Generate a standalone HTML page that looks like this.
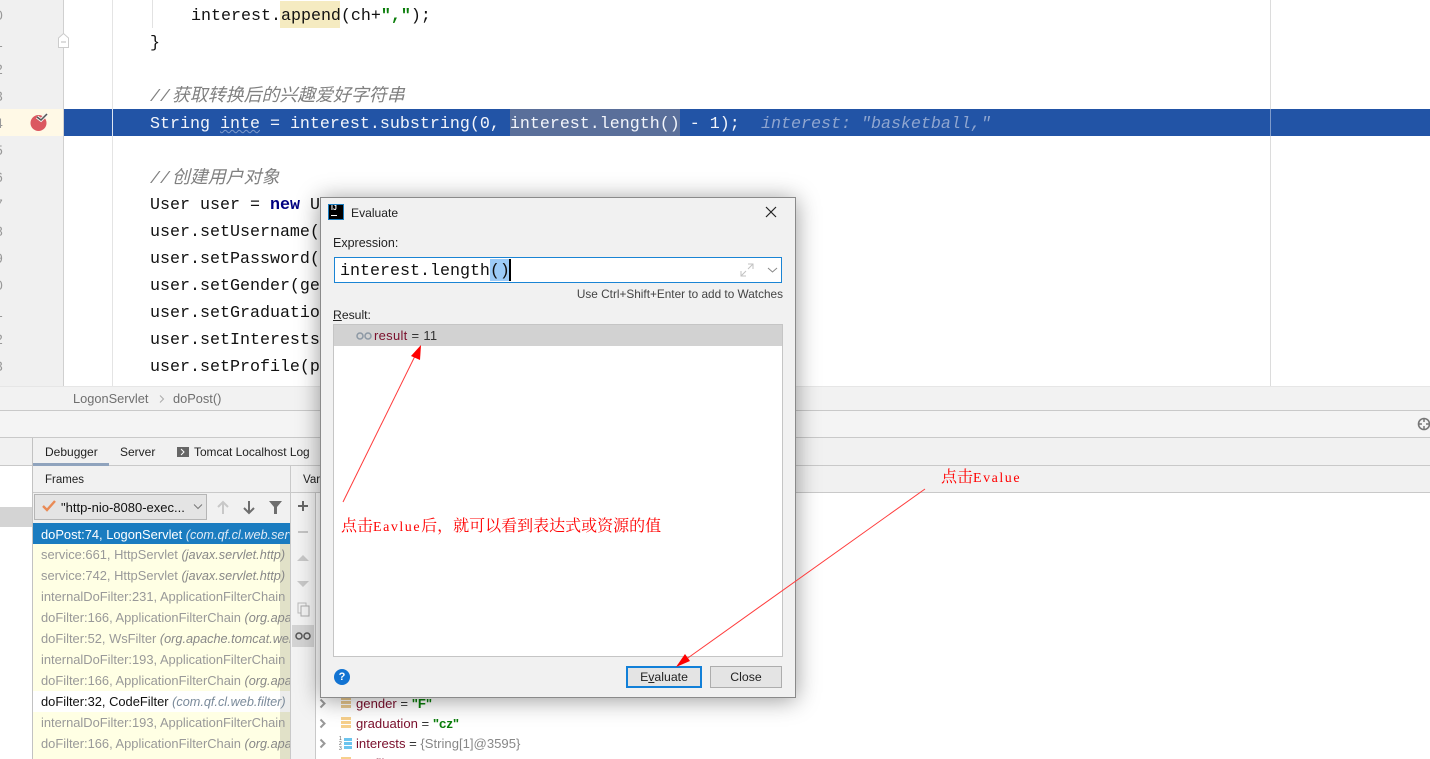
<!DOCTYPE html>
<html style="overflow:hidden;height:759px"><head><meta charset="utf-8"><style>
html,body{margin:0;padding:0}
body{width:1430px;height:759px;overflow:hidden;background:#fff;position:relative;font-family:"Liberation Sans","Noto Sans CJK SC",sans-serif}
.a{position:absolute}
.c{position:absolute;left:150px;height:27px;font:16.67px/27px "Liberation Mono","Noto Sans CJK SC",monospace;color:#111;white-space:pre}
.cm{font-style:italic;color:#808080}
.cm span{font-size:17.9px;margin-left:2px}
.t{position:absolute;white-space:pre;font-size:12px;line-height:16px;color:#222}
.f{position:absolute;left:41px;white-space:pre;font-size:12.9px;line-height:21px;height:21px;color:#999;width:249px;overflow:hidden}
.f i{color:#888;font-size:12.7px}
.n{position:absolute;left:-5px;font:14px/14px "Liberation Sans",sans-serif;color:#999;width:10px}
.v{position:absolute;left:356px;white-space:pre;font-size:13.1px;line-height:16px;color:#7a0f2c}
.red{position:absolute;color:#f00;white-space:pre;font:16px/20px "Noto Serif CJK SC",serif}
.red span{font:14px/20px "Liberation Serif",serif;letter-spacing:1.530px}
</style></head><body>

<!-- editor -->
<div class="a" style="left:0;top:0;width:64px;height:386px;background:#f0f0f0;border-right:1px solid #d0d0d0;box-sizing:border-box"></div>
<div class="a" style="left:112px;top:0;width:1px;height:386px;background:#e4e4e4"></div>
<div class="a" style="left:1270px;top:0;width:1px;height:386px;background:#dcdcdc"></div>
<div class="a" style="left:0;top:109px;width:63px;height:27px;background:#fff9e6"></div>
<div class="a" style="left:64px;top:109px;width:1366px;height:27px;background:#2254a6"></div>
<div class="a" style="left:112px;top:109px;width:1px;height:27px;background:#dfe6f2"></div>
<div class="a" style="left:1270px;top:109px;width:1px;height:27px;background:#7f9bcb"></div>
<div class="a" style="left:152px;top:0;width:1px;height:28px;background:#e2e2e2"></div>
<div class="a" style="left:280px;top:1px;width:60px;height:27px;background:#f5ebc1"></div>
<div class="a" style="left:510px;top:109px;width:170px;height:27px;background:#5a6f9a"></div>
<svg class="a" style="left:57px;top:32px" width="14" height="17"><path d="M1.500 15.500V6L6.500 1.500 11.500 6v9.500z" fill="#fff" stroke="#ccc"/><path d="M4 10h5" stroke="#bbb"/></svg>
<svg class="a" style="left:28px;top:112px" width="22" height="22"><circle cx="10.500" cy="11" r="8" fill="#db5860"/><path d="M9 5l4 3 6-6" fill="none" stroke="#f3f3f3" stroke-width="3.500"/><path d="M9 5l4 3 6-6" fill="none" stroke="#555" stroke-width="1.500"/></svg>
<div class="n" style="top:8px">0</div><div class="n" style="top:35px">1</div><div class="n" style="top:62px">2</div><div class="n" style="top:89px">3</div><div class="n" style="top:116px">4</div><div class="n" style="top:143px">5</div><div class="n" style="top:170px">6</div><div class="n" style="top:197px">7</div><div class="n" style="top:224px">8</div><div class="n" style="top:251px">9</div><div class="n" style="top:278px">0</div><div class="n" style="top:305px">1</div><div class="n" style="top:332px">2</div><div class="n" style="top:359px">3</div>

<div class="c" style="top:3px;left:191px">interest.append(ch+<span style="color:#0a7d0a;font-weight:bold">","</span>);</div>
<div class="c" style="top:30px">}</div>
<div class="c cm" style="top:84px">//<span>获取转换后的兴趣爱好字符串</span></div>
<div class="c" style="top:111px;color:#f2f5fb">String <span style="text-decoration:underline wavy #7f9bcb 1px">inte</span> = interest.substring(0, interest.length() - 1);</div>
<div class="c" style="top:111px;left:761px;font-style:italic;color:#8fa6d0">interest: "basketball,"</div>
<div class="c cm" style="top:166px">//<span>创建用户对象</span></div>
<div class="c" style="top:192px">User user = <b style="color:#000080">new</b> User();</div>
<div class="c" style="top:219px">user.setUsername(username);</div>
<div class="c" style="top:246px">user.setPassword(password);</div>
<div class="c" style="top:273px">user.setGender(gender);</div>
<div class="c" style="top:300px">user.setGraduation(graduation);</div>
<div class="c" style="top:327px">user.setInterests(inte);</div>
<div class="c" style="top:354px">user.setProfile(profile);</div>

<!-- breadcrumb and toolbars -->
<div class="a" style="left:0;top:386px;width:1430px;height:25px;background:#f2f2f2;border-top:1px solid #e6e6e6;border-bottom:1px solid #c9c9c9;box-sizing:border-box"></div>
<div class="t" style="left:73px;top:391px;color:#6f6f6f;font-size:12.800px">LogonServlet</div>
<svg class="a" style="left:158px;top:394px" width="8" height="10"><path d="M2 1.500l3.500 3.500L2 8.500" fill="none" stroke="#aaa"/></svg>
<div class="t" style="left:173px;top:391px;color:#6f6f6f;font-size:12.800px">doPost()</div>
<div class="a" style="left:0;top:411px;width:1430px;height:27px;background:#f4f4f4;border-bottom:1px solid #c9c9c9;box-sizing:border-box"></div>
<svg class="a" style="left:1417px;top:417px" width="13" height="14"><circle cx="7" cy="7" r="5.500" fill="none" stroke="#777" stroke-width="1.600"/><path d="M7 1v4M7 9v4M1 7h4M9 7h4" stroke="#777" stroke-width="1.500"/></svg>

<div class="a" style="left:0;top:438px;width:1430px;height:28px;background:#f1f1f1;border-bottom:1px solid #c9c9c9;box-sizing:border-box"></div>
<div class="a" style="left:0;top:466px;width:33px;height:293px;background:#fff"></div>
<div class="a" style="left:0;top:507px;width:33px;height:20px;background:#d4d4d4"></div>
<div class="a" style="left:32px;top:438px;width:1px;height:321px;background:#c2c2c2"></div>
<div class="a" style="left:33px;top:463px;width:76px;height:3px;background:#8fa3bd"></div>
<div class="t" style="left:45px;top:444px;font-size:12px">Debugger</div>
<div class="t" style="left:120px;top:444px;font-size:12px">Server</div>
<div class="a" style="left:177px;top:447px;width:12px;height:10px;background:#666"></div>
<svg class="a" style="left:177px;top:447px" width="12" height="10"><path d="M4 2l3 3-3 3" fill="none" stroke="#fff"/></svg>
<div class="t" style="left:194px;top:444px;font-size:11.900px">Tomcat Localhost Log</div>

<div class="a" style="left:33px;top:466px;width:1397px;height:27px;background:#f1f1f1;border-bottom:1px solid #c9c9c9;box-sizing:border-box"></div>
<div class="t" style="left:45px;top:472px;font-size:11.500px">Frames</div>
<div class="t" style="left:303px;top:472px;font-size:11.500px">Var</div>
<div class="a" style="left:33px;top:493px;width:258px;height:30px;background:#f1f1f1"></div>
<div class="a" style="left:34px;top:494px;width:173px;height:26px;background:#e4e4e4;border:1px solid #b5b5b5;box-sizing:border-box"></div>
<svg class="a" style="left:41px;top:499px" width="16" height="14"><path d="M2 7l4 4 8-9" fill="none" stroke="#e98a55" stroke-width="2.400"/></svg>
<div class="t" style="left:61px;top:500px;font-size:13px;color:#111">"http-nio-8080-exec...</div>
<svg class="a" style="left:192px;top:503px" width="12" height="8"><path d="M2 1.500l4 4 4-4" fill="none" stroke="#777"/></svg>
<svg class="a" style="left:216px;top:499px" width="70" height="17"><path d="M7 15V3M2 8l5-5 5 5" fill="none" stroke="#c8c8c8" stroke-width="2"/><path d="M33 2v12M28 9l5 5 5-5" fill="none" stroke="#6e6e6e" stroke-width="2"/><path d="M53 2h13l-5 6v7h-3V8z" fill="#6e6e6e"/></svg>

<!-- frames -->
<div class="a" style="left:33px;top:523px;width:257px;height:236px;background:#ffffe4"></div>
<div class="a" style="left:280px;top:544px;width:10px;height:215px;background:#e1e1c8"></div>
<div class="a" style="left:33px;top:523px;width:257px;height:21px;background:#1a7cc0"></div>
<div class="a" style="left:33px;top:691px;width:247px;height:21px;background:#fff"></div>
<div class="a" style="left:280px;top:691px;width:10px;height:21px;background:#ececec"></div>
<div class="f" style="top:524px;color:#fff">doPost:74, LogonServlet <i style="color:#dfeaf5">(com.qf.cl.web.servlet)</i></div>
<div class="f" style="top:544px">service:661, HttpServlet <i>(javax.servlet.http)</i></div>
<div class="f" style="top:565px">service:742, HttpServlet <i>(javax.servlet.http)</i></div>
<div class="f" style="top:586px">internalDoFilter:231, ApplicationFilterChain</div>
<div class="f" style="top:607px">doFilter:166, ApplicationFilterChain <i>(org.apache)</i></div>
<div class="f" style="top:628px">doFilter:52, WsFilter <i>(org.apache.tomcat.websocket)</i></div>
<div class="f" style="top:649px">internalDoFilter:193, ApplicationFilterChain</div>
<div class="f" style="top:670px">doFilter:166, ApplicationFilterChain <i>(org.apache)</i></div>
<div class="f" style="top:691px;color:#111">doFilter:32, CodeFilter <i style="color:#7a8a9a">(com.qf.cl.web.filter)</i></div>
<div class="f" style="top:712px">internalDoFilter:193, ApplicationFilterChain</div>
<div class="f" style="top:733px">doFilter:166, ApplicationFilterChain <i>(org.apache)</i></div>

<!-- side toolbar -->
<div class="a" style="left:290px;top:466px;width:1px;height:293px;background:#c9c9c9"></div>
<div class="a" style="left:291px;top:493px;width:24px;height:266px;background:#f3f3f3"></div>
<div class="a" style="left:315px;top:493px;width:1px;height:266px;background:#c9c9c9"></div>
<div class="a" style="left:316px;top:493px;width:1114px;height:266px;background:#fff"></div>
<svg class="a" style="left:292px;top:495px" width="22" height="160"><path d="M6 11h10M11 6v10" stroke="#666" stroke-width="2"/><path d="M6 37h10" stroke="#c4c4c4" stroke-width="2"/><path d="M5 66l6-6 6 6zM5 86h12l-6 6z" fill="#c8c8c8"/><rect x="6" y="108" width="8" height="10" fill="none" stroke="#bbb"/><rect x="9" y="111" width="8" height="10" fill="#f3f3f3" stroke="#aaa"/></svg>
<div class="a" style="left:292px;top:625px;width:22px;height:22px;background:#d4d4d4"></div>
<svg class="a" style="left:295px;top:631px" width="16" height="10"><circle cx="4" cy="5" r="3" fill="none" stroke="#555" stroke-width="1.500"/><circle cx="12" cy="5" r="3" fill="none" stroke="#555" stroke-width="1.500"/></svg>

<!-- variables -->
<svg class="a" style="left:318px;top:698px" width="10" height="60"><path d="M2.500 1.500l4 4-4 4M2.500 21.500l4 4-4 4M2.500 41.500l4 4-4 4" fill="none" stroke="#999" stroke-width="2"/></svg>
<div class="a" style="left:341px;top:697px;width:10px;height:3px;background:#e8c88e;box-shadow:0 4px #e8c88e,0 8px #e8c88e"></div>
<div class="a" style="left:341px;top:717px;width:10px;height:3px;background:#f7d08c;box-shadow:0 4px #f7d08c,0 8px #f7d08c"></div>
<div class="a" style="left:344px;top:738px;width:8px;height:3px;background:#6cc4ee;box-shadow:0 4px #6cc4ee,0 8px #6cc4ee"></div>
<div class="t" style="left:339px;top:737px;font-size:5px;line-height:5px;color:#555">1<br>2<br>3</div>
<div class="v" style="top:696px">gender <span style="color:#333">=</span> <b style="color:#0a7d0a">"F"</b></div>
<div class="v" style="top:716px">graduation <span style="color:#333">=</span> <b style="color:#0a7d0a">"cz"</b></div>
<div class="v" style="top:736px">interests <span style="color:#333">=</span> <span style="color:#888">{String[1]@3595}</span></div>
<div class="v" style="top:756px;height:3px;overflow:hidden">profile <span style="color:#333">=</span> <b style="color:#0a7d0a">"111"</b></div>
<div class="a" style="left:341px;top:757px;width:10px;height:2px;background:#f7d08c"></div>

<!-- dialog -->
<div class="a" style="left:320px;top:197px;width:476px;height:501px;background:#f1f1f1;border:1px solid #8a8a8a;box-sizing:border-box;box-shadow:0 2px 22px rgba(0,0,0,.4)"></div>
<div class="a" style="left:328px;top:204px;width:16px;height:16px;background:#000;box-sizing:border-box;border:1px solid #1a7cc0"></div>
<div class="t" style="left:331px;top:205px;font-size:7px;line-height:8px;font-weight:bold;color:#fff">IJ</div>
<div class="a" style="left:331px;top:215px;width:6px;height:1px;background:#fff"></div>
<div class="t" style="left:351px;top:205px;font-size:12.100px">Evaluate</div>
<svg class="a" style="left:765px;top:206px" width="12" height="12"><path d="M1 1l10 10M11 1L1 11" stroke="#222" stroke-width="1.200"/></svg>
<div class="t" style="left:333px;top:235px;font-size:12.500px">Expression:</div>
<div class="a" style="left:334px;top:257px;width:448px;height:26px;background:#fff;border:1px solid #1a84d4;box-sizing:border-box"></div>
<div class="a" style="left:490px;top:259px;width:19px;height:22px;background:#9ccbf7"></div>
<div class="a" style="left:509px;top:259px;width:2px;height:22px;background:#000"></div>
<div class="c" style="left:340px;top:258px;height:26px;line-height:27px;color:#111">interest.length()</div>
<svg class="a" style="left:740px;top:263px" width="40" height="14"><path d="M1 13l5-5M13 1L8 6M1 8v5h5M8 1h5v5" fill="none" stroke="#c2c2c2"/><path d="M28 5l4.500 4 4.500-4" fill="none" stroke="#888"/></svg>
<div class="t" style="right:647px;top:286px;font-size:11.800px;color:#444">Use Ctrl+Shift+Enter to add to Watches</div>
<div class="t" style="left:333px;top:307px;font-size:12.200px"><u>R</u>esult:</div>
<div class="a" style="left:333px;top:324px;width:450px;height:333px;background:#fff;border:1px solid #c5c5c5;box-sizing:border-box"></div>
<div class="a" style="left:334px;top:325px;width:448px;height:21px;background:#d2d2d2"></div>
<svg class="a" style="left:356px;top:331px" width="17" height="10"><circle cx="4" cy="5" r="3" fill="none" stroke="#8c98a4" stroke-width="1.500"/><circle cx="12" cy="5" r="3" fill="none" stroke="#8c98a4" stroke-width="1.500"/></svg>
<div class="t" style="left:374px;top:328px;font-size:13px;letter-spacing:.3px;color:#7a0f2c">result <span style="color:#333">= 11</span></div>
<svg class="a" style="left:334px;top:336px" width="100" height="180"><path d="M9 166L82 18" stroke="#ff3b3b" fill="none"/><path d="M87 9l-1 15-9-4z" fill="#f00"/></svg>
<div class="red" style="left:341px;top:515px">点击<span>Eavlue</span>后，就可以看到表达式或资源的值</div>
<div class="a" style="left:334px;top:669px;width:16px;height:16px;border-radius:50%;background:#1273d2;color:#fff;font:bold 11px/16px 'Liberation Sans',sans-serif;text-align:center">?</div>
<div class="a" style="left:626px;top:666px;width:76px;height:22px;box-sizing:border-box;background:#e4e4e4;border:2px solid #1280d8;font-size:12.300px;line-height:18px;text-align:center;color:#222">E<u>v</u>aluate</div>
<div class="a" style="left:710px;top:666px;width:72px;height:22px;box-sizing:border-box;background:#e4e4e4;border:1px solid #adadad;font-size:12.300px;line-height:20px;text-align:center;color:#222">Close</div>
<div class="red" style="left:941px;top:466px">点击<span>Evalue</span></div>
<svg class="a" style="left:670px;top:485px" width="260" height="185"><path d="M255 4L15 175" stroke="#ff3b3b" fill="none"/><path d="M6 182l9-13 5 7z" fill="#f00"/></svg>
</body></html>
